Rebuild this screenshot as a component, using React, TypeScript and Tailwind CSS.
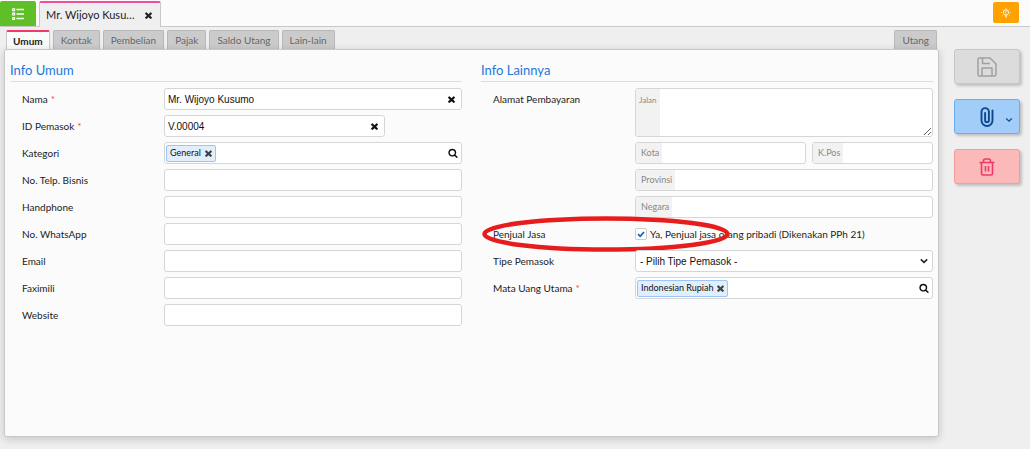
import React from "react";

const FIELD =
  "h-[22px] rounded-[3px] border border-[#d6d6d6] bg-white font-['Liberation_Sans',Arial,sans-serif] text-[10px] text-[#111]";

function Cross({ className = "" }: { className?: string }) {
  return (
    <svg viewBox="300 300 1192 1256" preserveAspectRatio="none" className={className} fill="currentColor" aria-hidden="true">
      <path d="M1490 1322q0 40-28 68l-136 136q-28 28-68 28t-68-28l-294-294-294 294q-28 28-68 28t-68-28l-136-136q-28-28-28-68t28-68l294-294-294-294q-28-28-28-68t28-68l136-136q28-28 68-28t68 28l294 294 294-294q28-28 68-28t68 28l136 136q28 28 28 68t-28 68l-294 294 294 294q28 28 28 68z" />
    </svg>
  );
}

function Magnifier() {
  return (
    <svg viewBox="0 0 1792 1792" className="size-[10px]" fill="currentColor" aria-hidden="true">
      <path d="M1216 832q0-185-131.500-316.500t-316.500-131.500-316.500 131.500-131.500 316.500 131.500 316.500 316.500 131.500 316.500-131.500 131.500-316.500zm512 832q0 52-38 90t-90 38q-54 0-90-38l-343-342q-179 124-399 124-143 0-273.500-55.500t-225-150-150-225-55.500-273.500 55.500-273.500 150-225 225-150 273.500-55.500 273.500 55.500 225 150 150 225 55.500 273.500q0 220-124 399l343 343q37 37 37 90z" />
    </svg>
  );
}

function Row({ id, label, required, children }: { id: string; label: string; required?: boolean; children: React.ReactNode }) {
  return (
    <div className="flex items-start">
      <label htmlFor={id} className="w-[154px] shrink-0 pl-3 text-[10px] leading-[22px]">
        {label}
        {required && <span className="pl-[3px] text-[#f44]">*</span>}
      </label>
      <div className="min-w-0 flex-1">{children}</div>
    </div>
  );
}

function TextField({ id, value, narrow }: { id: string; value?: string; narrow?: boolean }) {
  return (
    <div className={`flex items-center pr-[6px] ${FIELD} ${narrow ? "w-[74%]" : ""}`}>
      <input id={id} defaultValue={value} className="h-full min-w-0 flex-1 bg-transparent px-[3px] focus:outline-none" />
      {value && (
        <button type="button" aria-label="Hapus isi" className="flex">
          <Cross className="size-[7px]" />
        </button>
      )}
    </div>
  );
}

function TagField({ id, tag }: { id: string; tag: string }) {
  return (
    <div className={`flex items-center pr-[3px] pl-px ${FIELD}`}>
      <span className="flex h-[17px] items-center gap-1 rounded-[2px] border border-[#9cc5f5] bg-[#e1eefc] px-[3px] font-['Lato',sans-serif] text-[9px]">
        {tag}
        <button type="button" aria-label={`Hapus ${tag}`} className="flex text-[#444]">
          <Cross className="size-[7px]" />
        </button>
      </span>
      <input id={id} className="h-full min-w-0 flex-1 bg-transparent px-1 focus:outline-none" />
      <button type="button" aria-label="Cari" className="flex">
        <Magnifier />
      </button>
    </div>
  );
}

function AddonField({ id, label, className = "" }: { id: string; label: string; className?: string }) {
  return (
    <div className={`flex overflow-hidden ${FIELD} ${className}`}>
      <label htmlFor={id} className="bg-[#f2f2f2] pr-[3px] pl-[5px] font-['Lato',sans-serif] text-[9px] leading-[20px] text-[#888]">
        {label}
      </label>
      <input id={id} className="min-w-0 flex-1 px-1 focus:outline-none" />
    </div>
  );
}

function SectionTitle({ children }: { children: React.ReactNode }) {
  return (
    <h2 className="mb-[6px] border-b border-[#ddd] pt-px pb-px text-[13px] leading-[20px] text-[#2277dd]">{children}</h2>
  );
}

const TABS = ["Kontak", "Pembelian", "Pajak", "Saldo Utang", "Lain-lain"];
const TAB = "h-[19px] rounded-t-[2px] border border-b-0 border-[#b8b8b8] bg-[#cbcbcb] px-[7px] text-[10px] leading-[18px] text-[#666]";
const CONTACTS = [
  ["telp", "No. Telp. Bisnis"],
  ["hp", "Handphone"],
  ["wa", "No. WhatsApp"],
  ["email", "Email"],
  ["fax", "Faximili"],
  ["web", "Website"],
];
const ACTION = "relative flex h-[35px] items-center justify-center rounded-[3px] border shadow-[2px_2px_3px_rgba(0,0,0,0.2)]";

export default function App() {
  return (
    <div className="flex min-h-screen flex-col bg-[#efefef] font-['Lato','Noto_Sans',sans-serif] text-[#1c1c1c]">
      <header className="flex h-[27px] items-end border-b border-[#c8c8c8] bg-[#fbfbfb]">
        <button type="button" aria-label="Daftar" className="flex h-[25px] w-9 items-center justify-center rounded-t-[2px] bg-[#5fbf26] text-white">
          <svg viewBox="0 0 12 12" className="size-3" fill="none" stroke="currentColor" aria-hidden="true">
            <path d="M4.500 1.500H12M4.500 6H12M4.500 10.500H12" strokeWidth="1.500" />
            <path d="M.7.700h1.900v1.900H.7zM.7 5.100h1.900v1.900H.7zM.7 9.500h1.900v1.900H.7z" strokeWidth="1.100" />
          </svg>
        </button>
        <div className="-mb-px ml-[3px] flex h-[26px] w-[122px] items-center justify-between rounded-t-[2px] border border-t-2 border-b-0 border-[#c8c8c8] border-t-[#f04ca0] bg-[#efefef] pr-2 pl-[6px] text-[11px]">
          <span>Mr. Wijoyo Kusu…</span>
          <button type="button" aria-label="Tutup tab" className="flex text-[#222]">
            <Cross className="size-[7px]" />
          </button>
        </div>
        <button type="button" aria-label="Bantuan" className="mr-[11px] mb-[3px] ml-auto flex h-[21px] w-[26px] items-center justify-center rounded-[2px] bg-[#ffa200] text-white">
          <svg viewBox="0 0 12 12" className="size-[10px]" fill="none" stroke="currentColor" aria-hidden="true">
            <path d="M4.600 8.300C3.300 7.500 2.900 6.500 2.900 5.300a3.100 3.100 0 0 1 6.200 0c0 1.200-.4 2.200-1.700 3z" strokeWidth="1.200" />
            <path d="M4.800 9.600h2.400M5.200 10.900h1.600M6 4v2.500" strokeWidth="1.100" />
            <path d="M6 0v1M1.300 1.300l.8.800M10.700 1.300l-.8.800M0 5.500h1.200M10.800 5.500H12M1.300 9.500l.8-.8M10.700 9.500l-.8-.8" strokeWidth=".8" />
          </svg>
        </button>
      </header>

      <div className="flex flex-1 gap-[15px] pt-[3px] pr-[10px] pb-3 pl-1">
        <main className="flex min-w-0 flex-1 flex-col">
          <nav className="flex gap-[3px] px-[2px]">
            <button type="button" className="-mb-px h-5 rounded-t-[2px] border border-t-2 border-b-0 border-[#c8c8c8] border-t-[#f0386b] bg-[#fbfbfb] px-[6px] text-[10px] leading-[18px] font-bold">
              Umum
            </button>
            {TABS.map((tab) => (
              <button key={tab} type="button" className={TAB}>
                {tab}
              </button>
            ))}
            <button type="button" className={`ml-auto ${TAB}`}>
              Utang
            </button>
          </nav>

          <form className="grid flex-1 grid-cols-2 gap-[19px] rounded-[3px] border border-[#c8c8c8] bg-[#fbfbfb] px-[5px] pt-[9px] shadow-[0_2px_8px_rgba(0,0,0,0.18)]">
            <section>
              <SectionTitle>Info Umum</SectionTitle>
              <div className="flex flex-col gap-[5px]">
                <Row id="nama" label="Nama" required>
                  <TextField id="nama" value="Mr. Wijoyo Kusumo" />
                </Row>
                <Row id="id-pemasok" label="ID Pemasok" required>
                  <TextField id="id-pemasok" value="V.00004" narrow />
                </Row>
                <Row id="kategori" label="Kategori">
                  <TagField id="kategori" tag="General" />
                </Row>
                {CONTACTS.map(([id, label]) => (
                  <Row key={id} id={id} label={label}>
                    <TextField id={id} />
                  </Row>
                ))}
              </div>
            </section>

            <section>
              <SectionTitle>Info Lainnya</SectionTitle>
              <div className="flex flex-col gap-[5px]">
                <Row id="jalan" label="Alamat Pembayaran">
                  <div className="flex flex-col gap-[5px]">
                    <div className="flex h-[49px] overflow-hidden rounded-[3px] border border-[#d6d6d6] bg-white">
                      <label htmlFor="jalan" className="bg-[#f2f2f2] px-[3px] pt-1 text-[8px] leading-[14px] text-[#888]">
                        Jalan
                      </label>
                      <textarea id="jalan" className="min-w-0 flex-1 resize px-1 text-[11px] focus:outline-none" />
                    </div>
                    <div className="flex gap-[6px]">
                      <AddonField id="kota" label="Kota" className="min-w-0 flex-[172]" />
                      <AddonField id="kpos" label="K.Pos" className="min-w-0 flex-[121]" />
                    </div>
                    <AddonField id="provinsi" label="Provinsi" />
                    <AddonField id="negara" label="Negara" />
                  </div>
                </Row>
                <div className="relative">
                  <Row id="jasa" label="Penjual Jasa">
                    <label className="flex h-[22px] items-center gap-[3px] text-[10px] whitespace-nowrap">
                      <span className="relative flex">
                        <input
                          id="jasa"
                          type="checkbox"
                          defaultChecked
                          className="peer size-3 appearance-none rounded-[2px] border border-[#ccc] bg-white"
                        />
                        <svg viewBox="0 0 12 12" className="pointer-events-none absolute inset-0 hidden size-3 peer-checked:block" fill="none" stroke="#1f5fb4" strokeWidth="1.800" aria-hidden="true">
                          <path d="M3 6.200l2.200 2.100L9 4" />
                        </svg>
                      </span>
                      Ya, Penjual jasa orang pribadi (Dikenakan PPh 21)
                    </label>
                  </Row>
                  <svg viewBox="0 0 248 36" className="pointer-events-none absolute -top-[7px] left-[1px] h-9 w-[248px]" fill="none" aria-hidden="true">
                    <ellipse cx="124" cy="18" rx="121.500" ry="15.500" stroke="#e71d1d" strokeWidth="4.500" />
                  </svg>
                </div>
                <Row id="tipe" label="Tipe Pemasok">
                  <div className="relative flex">
                    <select id="tipe" className={`w-full appearance-none px-1 ${FIELD}`}>
                      <option>- Pilih Tipe Pemasok -</option>
                    </select>
                    <svg viewBox="0 0 8 8" className="pointer-events-none absolute top-[7px] right-[5px] size-2" fill="none" stroke="#222" strokeWidth="1.500" aria-hidden="true">
                      <path d="M.8 2.400L4 5.400l3.200-3" />
                    </svg>
                  </div>
                </Row>
                <Row id="mata-uang" label="Mata Uang Utama" required>
                  <TagField id="mata-uang" tag="Indonesian Rupiah" />
                </Row>
              </div>
            </section>
          </form>
        </main>

        <aside className="flex w-[66px] shrink-0 flex-col gap-[15px] pt-[19px]">
          <button type="button" aria-label="Simpan" className={`${ACTION} border-[#c6c6c6] bg-[#dcdcdc] text-[#a0a0a0]`}>
            <svg viewBox="0 0 20 20" className="size-5" fill="none" stroke="currentColor" strokeWidth="1.500" strokeLinejoin="round" aria-hidden="true">
              <path d="M2.500 1H13l6 6v10.500a1.500 1.500 0 0 1-1.500 1.500h-15A1.500 1.500 0 0 1 1 17.500v-15A1.500 1.500 0 0 1 2.500 1z" />
              <path d="M5 19v-8h10v8M5.500 1v5.500h7.500" />
            </svg>
          </button>
          <button type="button" aria-label="Lampiran" className={`${ACTION} border-[#69aef5] bg-[#a2cdf9] text-[#0b4a8f]`}>
            <svg viewBox="0 0 14 20" className="h-5 w-[14px]" fill="none" stroke="currentColor" strokeWidth="1.900" strokeLinecap="round" aria-hidden="true">
              <path d="M12.500 3.500v10a5.500 5.500 0 0 1-11 0V4.800a3.700 3.700 0 0 1 7.400 0v8.400a1.900 1.900 0 0 1-3.800 0V6" />
            </svg>
            <svg viewBox="0 0 8 8" className="absolute right-[6px] bottom-[9px] size-2" fill="none" stroke="currentColor" strokeWidth="1.200" aria-hidden="true">
              <path d="M1.200 2.500L4 5.200l2.800-2.700" />
            </svg>
          </button>
          <button type="button" aria-label="Hapus" className={`${ACTION} border-[#f69a9a] bg-[#fbb9b9] text-[#ee3a6a]`}>
            <svg viewBox="0 0 16 18" className="h-[18px] w-4" fill="none" stroke="currentColor" strokeWidth="1.600" strokeLinejoin="round" aria-hidden="true">
              <path d="M.5 4.500h15M2.500 4.500v11a1.500 1.500 0 0 0 1.500 1.500h8a1.500 1.500 0 0 0 1.500-1.500v-11M4.500 4.500V3A2 2 0 0 1 6.500 1h3a2 2 0 0 1 2 2v1.500M6.500 8v5.500M9.500 8v5.500" />
            </svg>
          </button>
        </aside>
      </div>
    </div>
  );
}
